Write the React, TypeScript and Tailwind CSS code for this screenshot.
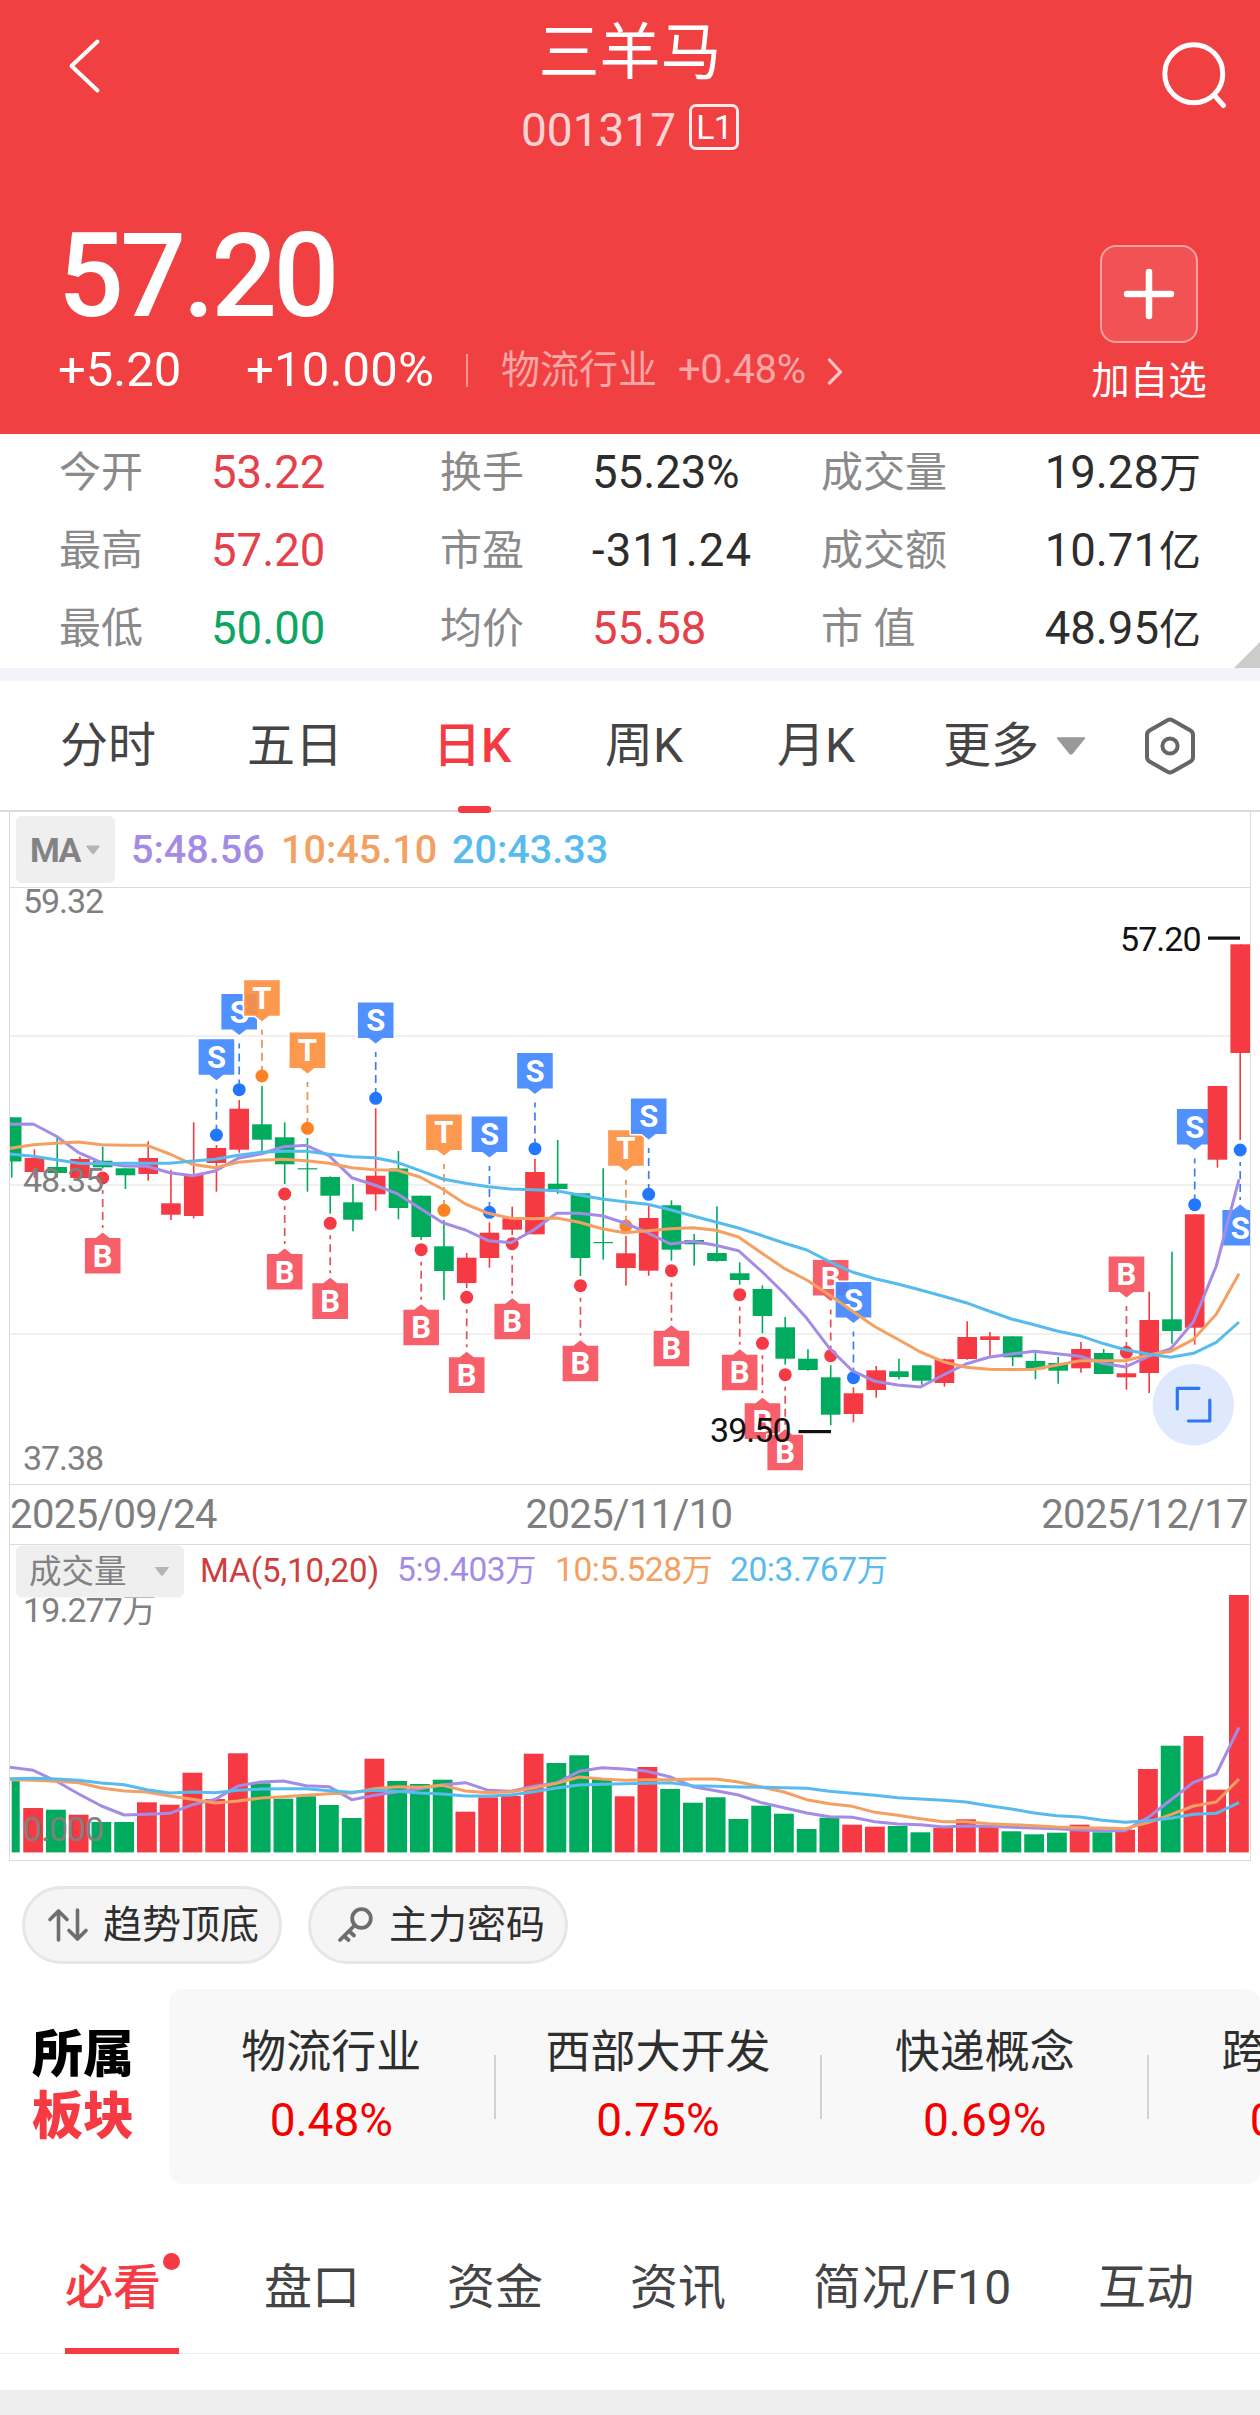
import React from "react";

const RED = "#f63a43";
const GREEN = "#00ab5e";

type Candle = [up: 0 | 1, high: number, top: number, bottom: number, low: number];

const CANDLES: Candle[] = [
  [0, 1117.3, 1117.3, 1161.5, 1177.7], [1, 1149.3, 1158, 1172, 1177.7], [0, 1137, 1167, 1173, 1177.7],
  [1, 1156.7, 1159, 1178, 1178], [0, 1146.7, 1160.7, 1167.3, 1168.3], [0, 1168.3, 1168.3, 1175.3, 1189],
  [1, 1141.3, 1158, 1174, 1180.7], [1, 1170, 1203.3, 1214.7, 1220], [1, 1122.3, 1175, 1216, 1218.3],
  [1, 1145, 1148, 1163, 1191.7], [1, 1100, 1108.7, 1149.7, 1152.7], [0, 1086, 1124.3, 1139.7, 1151],
  [0, 1122.3, 1137.3, 1164.3, 1184], [0, 1138, 1168.2, 1169.4, 1191.7], [0, 1176.3, 1177, 1195.7, 1213.7],
  [0, 1184, 1202.3, 1219.7, 1231.3], [1, 1108.3, 1175.7, 1194.3, 1210.7], [0, 1151, 1168.5, 1208, 1219.3],
  [0, 1195.7, 1195.7, 1237, 1240], [0, 1220, 1246.3, 1271, 1300], [1, 1253, 1257.7, 1283, 1288],
  [1, 1222.3, 1232.7, 1258, 1267.7], [1, 1206.7, 1218.3, 1229.7, 1235], [1, 1159, 1172, 1234.3, 1234.3],
  [0, 1140, 1183.7, 1189, 1194], [0, 1193.3, 1193.3, 1258, 1276], [0, 1168.3, 1242, 1243.2, 1259.7],
  [1, 1236, 1253.3, 1268, 1285.7], [1, 1206, 1218, 1270.7, 1275.7], [0, 1200.3, 1205.3, 1249.7, 1260.7],
  [0, 1234, 1240, 1244.3, 1265.7], [0, 1206.3, 1253, 1261, 1261.7], [0, 1262.3, 1273.3, 1280, 1284.7],
  [0, 1285.3, 1289, 1316, 1333.3], [0, 1317, 1327.3, 1358.7, 1364.7], [0, 1349.3, 1358.7, 1370, 1370.7],
  [0, 1365.3, 1377.3, 1414.7, 1425.3], [1, 1387.3, 1393.3, 1414, 1422.3], [1, 1366, 1370.3, 1390, 1397.7],
  [0, 1358.7, 1371.3, 1377, 1379.3], [0, 1365.3, 1365.3, 1380.7, 1384.7], [1, 1358.7, 1359.3, 1383, 1386.7],
  [1, 1321.3, 1337, 1359, 1359.7], [1, 1332, 1336.3, 1340, 1356], [0, 1336.3, 1336.3, 1357.3, 1366],
  [0, 1352.7, 1361, 1369.3, 1379.3], [0, 1357, 1363, 1370.7, 1383.7], [1, 1342, 1349, 1368.3, 1372.7],
  [0, 1349, 1353, 1374, 1374], [1, 1362.7, 1373.3, 1377.3, 1389.7], [1, 1291.7, 1320, 1373, 1393],
  [0, 1251.7, 1319.3, 1331, 1343.7], [1, 1214.3, 1214.3, 1327.7, 1344.7], [1, 1086, 1086, 1159.7, 1167.7],
  [1, 944.3, 944.3, 1053, 1140],
];

const MA5 = [
  1124.3, 1124, 1136, 1152.7, 1162.7, 1166, 1166.3, 1172.7, 1175.7, 1171, 1158.3, 1154, 1146.7, 1145.3, 1155.7,
  1177.7, 1185, 1193.7, 1208.3, 1222.7, 1230, 1240.7, 1242.7, 1230, 1213.3, 1213.3, 1215.7, 1223, 1232.7, 1244,
  1241.3, 1245.3, 1250.7, 1271, 1293.3, 1318.3, 1348.3, 1370.7, 1381.3, 1385, 1387, 1375, 1364, 1357.3, 1354,
  1351.3, 1353.7, 1356.3, 1363.3, 1367, 1356.7, 1348.7, 1321.7, 1266, 1179.3,
];
const MA10 = [
  1148.7, 1144.7, 1143.3, 1142, 1144.7, 1145.3, 1145.3, 1154, 1164.3, 1167.7, 1162.3, 1160.3, 1159.3, 1160.7,
  1163.3, 1167.7, 1169.7, 1170.3, 1177, 1189.3, 1204, 1213.3, 1218.3, 1218.7, 1218, 1222.3, 1228.7, 1232.7,
  1230.7, 1228.7, 1227.7, 1230.3, 1237, 1252.7, 1268.3, 1280, 1295, 1311, 1326.7, 1339.3, 1352, 1361.7, 1367.3,
  1369.3, 1369.5, 1369.3, 1365, 1360.7, 1360.7, 1360.7, 1355, 1351.3, 1339.3, 1314.3, 1273.7,
];
const MA20 = [
  1153.7, 1156.3, 1159.7, 1163.3, 1163.7, 1163.3, 1163.3, 1163.3, 1161, 1159.3, 1155.3, 1152.3, 1151.3, 1151.3,
  1154.3, 1156.7, 1157.7, 1162.3, 1170.7, 1179, 1183.3, 1186.7, 1189, 1189.7, 1190.7, 1195, 1199, 1201.7, 1204.3,
  1209.7, 1216, 1222, 1228, 1235.3, 1243, 1250, 1261.7, 1272, 1278.7, 1284, 1290, 1296.3, 1302.7, 1311, 1319,
  1324.7, 1331, 1335.7, 1343.3, 1349.7, 1354, 1357.3, 1353.3, 1342.3, 1322,
];

type Mark = { kind: "S" | "T" | "B"; dot: number; above: boolean };
const MARKS: Record<number, Mark> = {
  4: { kind: "B", dot: 1178, above: false },
  9: { kind: "S", dot: 1135, above: true },
  10: { kind: "S", dot: 1089.7, above: true },
  11: { kind: "T", dot: 1076, above: true },
  12: { kind: "B", dot: 1194, above: false },
  13: { kind: "T", dot: 1128.3, above: true },
  14: { kind: "B", dot: 1223.3, above: false },
  16: { kind: "S", dot: 1098.3, above: true },
  18: { kind: "B", dot: 1249.7, above: false },
  19: { kind: "T", dot: 1210.3, above: true },
  20: { kind: "B", dot: 1297.3, above: false },
  21: { kind: "S", dot: 1212.3, above: true },
  22: { kind: "B", dot: 1243.7, above: false },
  23: { kind: "S", dot: 1148.7, above: true },
  25: { kind: "B", dot: 1285.7, above: false },
  27: { kind: "T", dot: 1226, above: true },
  28: { kind: "S", dot: 1194.3, above: true },
  29: { kind: "B", dot: 1270.7, above: false },
  32: { kind: "B", dot: 1294.7, above: false },
  33: { kind: "B", dot: 1343.3, above: false },
  34: { kind: "B", dot: 1374.7, above: false },
  36: { kind: "B", dot: 1355.7, above: true },
  37: { kind: "S", dot: 1377.7, above: true },
  49: { kind: "B", dot: 1352.3, above: true },
  52: { kind: "S", dot: 1204.7, above: true },
  54: { kind: "S", dot: 1150, above: false },
};
const MARK_COLOR = { S: "#2377ff", T: "#fd8224", B: "#f63a43" };
const MARK_DASH = { S: "#3f7fe8", T: "#e8924f", B: "#e2525c" };
const MARK_FILL = { S: "#4287ff", T: "#fd8f40", B: "#f6535e" };

const VOLUME_TOPS = [
  1781, 1808, 1809.7, 1814.7, 1822, 1822, 1802.3, 1804.7, 1772.7, 1799, 1753.3, 1783.3, 1798.7, 1796.3, 1805, 1818,
  1758.7, 1781, 1784, 1779.7, 1811.7, 1797.3, 1796, 1753.7, 1763, 1755.3, 1778.3, 1796.3, 1767, 1789, 1802.7,
  1797.3, 1819, 1805.7, 1813.7, 1829, 1817.7, 1824.7, 1826.7, 1826, 1832.3, 1828, 1819.3, 1827, 1831.3, 1834.3,
  1832.7, 1824.7, 1832.3, 1829.7, 1769, 1745.7, 1736, 1789.7, 1595,
];
/* Volume averages, in thirds of a pixel below the panel's 1520 line. */
const VMA5 = [
  741, 751, 783, 822, 858, 885, 883, 880, 854, 838, 798, 786, 783, 797, 800, 839, 826, 815, 806, 794, 788, 811, 814,
  799, 789, 754, 743, 747, 754, 771, 800, 812, 825, 848, 863, 879, 890, 892, 905, 912, 914, 921, 918, 919, 922, 924,
  926, 930, 932, 932, 893, 840, 787, 762, 622,
];
const VMA10 = [
  779, 781, 784, 788, 804, 813, 816, 828, 838, 849, 843, 834, 830, 826, 821, 819, 806, 800, 802, 796, 813, 818, 815,
  804, 790, 771, 777, 781, 779, 779, 777, 777, 786, 801, 816, 839, 851, 859, 877, 886, 896, 905, 905, 911, 914, 917,
  921, 923, 924, 926, 908, 884, 858, 846, 777,
];
const VMA20 = [
  776, 775, 777, 781, 789, 794, 809, 819, 816, 818, 811, 807, 806, 806, 812, 817, 811, 814, 819, 822, 828, 828, 825,
  815, 804, 795, 793, 791, 790, 788, 797, 799, 801, 802, 803, 805, 814, 820, 826, 833, 837, 841, 846, 857, 867, 879,
  887, 891, 901, 907, 902, 895, 883, 880, 848,
];

const cx = (i: number) => 11.7 + 22.75 * i;
const linePoints = (ys: number[]) => ys.map((y, i) => `${i === 0 ? 8 : cx(i) - 1.2},${y}`).join(" ");
const volPoints = (vs: number[]) => linePoints(vs.map((v) => 1520 + v / 3));

function Marker({ i, kind, dot, above }: Mark & { i: number }) {
  const x = cx(i);
  const top = above ? dot - 95.8 : dot + 60;
  const bottom = top + 35.6;
  const l = x - 17.8;
  const r = x + 17.8;
  const d = above
    ? `M${l} ${top}H${r}V${bottom}H${x + 7}L${x} ${bottom + 5.5}L${x - 7} ${bottom}H${l}Z`
    : `M${l} ${bottom}H${r}V${top}H${x + 7}L${x} ${top - 5.5}L${x - 7} ${top}H${l}Z`;
  return (
    <g>
      <line
        x1={x}
        x2={x}
        y1={above ? bottom + 14 : dot + 12}
        y2={above ? dot - 6 : top - 10}
        stroke={MARK_DASH[kind]}
        strokeWidth="1.7"
        strokeDasharray="8 5"
        strokeDashoffset={above ? 3 : 4}
      />
      <path d={d} fill={MARK_FILL[kind]} stroke="#fff" strokeWidth="3" strokeLinejoin="round" fillOpacity="0.92" paintOrder="stroke" />
      <text x={x} y={top + 28.7} fontSize="31" fontWeight="700" fill="#fff" textAnchor="middle">
        {kind}
      </text>
      <circle cx={x} cy={dot} r="6.5" fill={MARK_COLOR[kind]} />
    </g>
  );
}

function PriceChart() {
  return (
    <svg viewBox="10 888 1240 596" className="block h-[596px] w-[1240px]" fontFamily="Roboto, sans-serif">
      {[1036, 1185, 1334].map((y) => (
        <rect key={y} x="10" y={y - 1} width="1240" height="2" fill="#f0f0f0" />
      ))}
      {CANDLES.map(([up, high, top, bottom, low], i) => {
        const color = up ? RED : GREEN;
        return (
          <g key={i}>
            <rect x={cx(i) - 0.8} y={high} width="1.6" height={Math.max(low - high, 1)} fill={color} />
            <rect x={cx(i) - 9.8} y={top} width="19.6" height={Math.max(bottom - top, 1)} fill={color} />
            {MARKS[i] && <Marker i={i} {...MARKS[i]} />}
          </g>
        );
      })}
      <g fill="none" strokeWidth="3" strokeLinejoin="round">
        <polyline points={linePoints(MA5)} stroke="#a48ce6" />
        <polyline points={linePoints(MA10)} stroke="#f4a062" />
        <polyline points={linePoints(MA20)} stroke="#58bbef" />
      </g>
      <g fontSize="34" fill="#808080">
        <text x="23" y="913" textLength="81">59.32</text>
        <text x="23" y="1191.5" textLength="81">48.35</text>
        <text x="23" y="1470" textLength="81">37.38</text>
      </g>
      <g fontSize="34" fill="#111">
        <text x="1120" y="951" textLength="81.5">57.20</text>
        <text x="710" y="1441.7" textLength="81.5">39.50</text>
        <rect x="1208" y="936.5" width="32" height="3.2" />
        <rect x="798.5" y="1430" width="32.5" height="3.2" />
      </g>
      <circle cx="1193.3" cy="1404.7" r="40.7" fill="#dfe9fd" />
      <path
        d="M1177.3 1409V1388.3H1199M1209.8 1400V1421H1188.5"
        fill="none"
        stroke="#2b77f6"
        strokeWidth="3.2"
        strokeLinecap="round"
        strokeLinejoin="round"
      />
    </svg>
  );
}

function VolumeChart() {
  return (
    <svg viewBox="10 1594 1240 266" className="block h-[266px] w-[1240px]" fontFamily="Roboto, 'Noto Sans CJK SC', sans-serif">
      {VOLUME_TOPS.map((top, i) => (
        <rect
          key={i}
          x={cx(i) - (i === 0 ? 0 : 11.2)}
          y={top}
          width={i === 0 ? 8 : 19.8}
          height={1852.4 - top}
          fill={CANDLES[i][0] ? RED : GREEN}
        />
      ))}
      <g fill="none" strokeWidth="3" strokeLinejoin="round">
        <polyline points={volPoints(VMA5)} stroke="#a48ce6" />
        <polyline points={volPoints(VMA10)} stroke="#f4a062" />
        <polyline points={volPoints(VMA20)} stroke="#58bbef" />
      </g>
      <g fontSize="34" fill="#808080">
        <text x="23" y="1621.7" textLength="133">19.277万</text>
        <text x="23" y="1841" textLength="81">0.000</text>
      </g>
    </svg>
  );
}

function Header() {
  return (
    <header className="h-[434px] bg-[#f04042] text-white">
      <div className="grid h-[150px] grid-cols-[200px_1fr_200px]">
        <svg className="ml-[60px] mt-[30px] h-[72px] w-[50px]" viewBox="60 30 50 72" fill="none" stroke="#fff" strokeWidth="4" strokeLinecap="round" strokeLinejoin="round">
          <path d="M97.5 41.5L71.5 66L97.5 90.5" />
        </svg>
        <div className="flex flex-col items-center">
          <h1 className="mt-[17px] text-[61px] leading-[72px]">三羊马</h1>
          <div className="mt-[15px] flex h-[46px] items-center gap-[13px]">
            <span className="pt-[5px] text-[46px] leading-[46px] text-[#fdd2d2]">001317</span>
            <span className="flex h-[46px] w-[50px] items-center justify-center rounded-[7px] border-[3px] border-white/90 text-[34px] leading-[40px] tracking-[-1px]">
              L1
            </span>
          </div>
        </div>
        <svg className="ml-[90px] mt-[35px] h-[80px] w-[90px]" viewBox="1150 35 90 80" fill="none" stroke="#fff" strokeWidth="5" strokeLinecap="round">
          <circle cx="1193.8" cy="73.7" r="29" />
          <path d="M1214.5 95.5L1223.5 105.5" />
        </svg>
      </div>
      <div className="flex justify-between">
        <div>
          <div className="ml-[58px] mt-[68px] text-[116px] font-medium leading-[116px] tracking-[-3.6px]">57.20</div>
          <div className="mt-[16px] flex h-[40px] items-center pl-[58px]">
            <span className="w-[188px] text-[49px] leading-[40px]">+5.20</span>
            <span className="w-[220px] text-[49px] leading-[40px] tracking-[0.2px]">+10.00%</span>
            <span className="h-[33px] w-[2px] bg-white/45" />
            <span className="ml-[33px] w-[177px] text-[39px] leading-[40px] text-[#f9a6a6]">物流行业</span>
            <span className="w-[148px] text-[40px] leading-[40px] tracking-[-0.4px] text-[#f9a6a6]">+0.48%</span>
            <svg className="h-[30px] w-[20px]" viewBox="0 0 20 30" fill="none" stroke="#fcc4c4" strokeWidth="3.2" strokeLinecap="round" strokeLinejoin="round">
              <path d="M3.5 5L14.5 17L3.5 28" />
            </svg>
          </div>
        </div>
        <div className="mr-[50px] flex w-[122px] flex-col items-center">
          <div className="mt-[95px] flex h-[98px] w-[98px] items-center justify-center rounded-[16px] border-2 border-white/45 bg-white/10">
            <svg className="h-[52px] w-[52px]" viewBox="0 0 52 52" stroke="#fff" strokeWidth="6.5" strokeLinecap="round">
              <path d="M26 4V48M4 26H48" />
            </svg>
          </div>
          <span className="mt-[17px] text-[38.5px] leading-[42px]">加自选</span>
        </div>
      </div>
    </header>
  );
}

const STATS = [
  ["今开", "53.22", "text-[#e5414b]", "换手", "55.23%", "text-[#2d2d2d]", "成交量", "19.28", "万"],
  ["最高", "57.20", "text-[#e5414b]", "市盈", "-311.24", "text-[#2d2d2d] tracking-[1.1px]", "成交额", "10.71", "亿"],
  ["最低", "50.00", "text-[#0ea562]", "均价", "55.58", "text-[#e5414b]", "市 值", "48.95", "亿"],
];

function Stats() {
  return (
    <section className="relative h-[234px]">
      {STATS.map((r) => (
        <div key={r[0]} className="flex h-[78px] items-center pl-[59px] text-[45.5px] leading-[50px]">
          <span className="w-[152px] text-[42px] text-[#8a8a8a]">{r[0]}</span>
          <span className={`w-[229px] ${r[2]}`}>{r[1]}</span>
          <span className="w-[152px] text-[42px] text-[#8a8a8a]">{r[3]}</span>
          <span className={`w-[229px] ${r[5]}`}>{r[4]}</span>
          <span className="w-[130px] text-[42px] text-[#8a8a8a]">{r[6]}</span>
          <span className="w-[250px] text-right text-[#2d2d2d]">
            {r[7]}
            <span className="text-[42px]">{r[8]}</span>
          </span>
        </div>
      ))}
      <svg className="absolute bottom-0 right-0 h-[26px] w-[26px]" viewBox="0 0 26 26">
        <path d="M26 0V26H0Z" fill="#ccc" />
      </svg>
    </section>
  );
}

function PeriodTabs() {
  return (
    <nav className="flex h-[131px] items-center border-b-2 border-[#dcdcdc] pl-[60px] text-[48px] leading-[60px] text-[#444]">
      <span className="w-[187px]">分时</span>
      <span className="w-[186px]">五日</span>
      <span className="relative w-[172px] font-medium text-[#f63a43]">
        日K
        <i className="absolute left-[25px] top-[90px] h-[7px] w-[33px] rounded-[3px] bg-[#f63a43]" />
      </span>
      <span className="w-[172px]">周K</span>
      <span className="w-[166px]">月K</span>
      <span className="w-[112px]">更多</span>
      <svg className="h-[18px] w-[32px]" viewBox="0 0 32 18">
        <path d="M2.5 1H29.5L17 16.5Q16 17.5 15 16.5Z" fill="#999" stroke="#999" strokeWidth="1.5" strokeLinejoin="round" />
      </svg>
      <svg className="ml-[56px] h-[60px] w-[54px]" viewBox="0 0 54 60" fill="none" stroke="#666" strokeWidth="4" strokeLinejoin="round">
        <path d="M24.5 4.2Q27 2.8 29.5 4.2L47.5 14.5Q50 16 50 19V41Q50 44 47.5 45.5L29.5 55.8Q27 57.2 24.5 55.8L6.5 45.5Q4 44 4 41V19Q4 16 6.5 14.5Z" />
        <circle cx="27" cy="30" r="7.6" />
      </svg>
    </nav>
  );
}

function Caret({ className }: { className: string }) {
  return (
    <svg className={className} viewBox="0 0 16 10">
      <path d="M1.5 1H14.5L8.8 8.5Q8 9.3 7.2 8.5Z" fill="#b5b5b5" stroke="#b5b5b5" strokeLinejoin="round" />
    </svg>
  );
}

function ChartPanel() {
  return (
    <section className="ml-[9px] w-[1242px] border-x border-b border-[#dcdcdc]">
      <div className="flex h-[76px] items-center border-b border-[#dcdcdc] pl-[6px] text-[39.5px] font-medium leading-[50px]">
        <div className="flex h-[67px] w-[99px] items-center rounded-[6px] bg-[#efefef] pl-[14px] text-[34px] font-bold tracking-[-1.5px] text-[#838383]">
          <span className="w-[55px]">MA</span>
          <Caret className="h-[10px] w-[16px]" />
        </div>
        <span className="ml-[16px] w-[150px] text-[#a48ce6]">5:48.56</span>
        <span className="w-[171px] text-[#f4a062]">10:45.10</span>
        <span className="text-[#58bbef]">20:43.33</span>
      </div>
      <PriceChart />
      <div className="flex h-[61px] items-center justify-between border-y border-[#dcdcdc] pr-[2px] text-[40px] leading-[50px] tracking-[-0.6px] text-[#7e7e7e]">
        <span>2025/09/24</span>
        <span>2025/11/10</span>
        <span>2025/12/17</span>
      </div>
      <div className="relative flex h-[49px] items-center pl-[6px] text-[33.5px] leading-[52px]">
        <div className="flex h-[52px] w-[168px] translate-y-[1.5px] items-center rounded-[6px] bg-[#efefef] pl-[13px] text-[32.5px] text-[#828282]">
          <span className="w-[125px]">成交量</span>
          <Caret className="h-[10px] w-[16px]" />
        </div>
        <span className="ml-[16px] w-[197px] pt-[2px] text-[33px] text-[#cf3d3d]">MA(5,10,20)</span>
        <span className="w-[158px] pt-[2px] tracking-[-0.4px] text-[#a48ce6]">5:9.403<span className="text-[31px]">万</span></span>
        <span className="w-[175px] pt-[2px] tracking-[-0.4px] text-[#f4a062]">10:5.528<span className="text-[31px]">万</span></span>
        <span className="pt-[2px] tracking-[-0.4px] text-[#58bbef]">20:3.767<span className="text-[31px]">万</span></span>
      </div>
      <VolumeChart />
    </section>
  );
}

function Tools() {
  return (
    <div className="flex gap-[26px] pl-[22px] pt-[25px]">
      <div className="flex h-[78px] w-[260px] items-center rounded-full border-[3px] border-[#e6e6e6] bg-[#f5f5f5] pl-[22px] text-[39px] leading-[50px] text-[#2e2e2e]">
        <svg className="mr-[14px] h-[36px] w-[42px]" viewBox="0 0 42 36" fill="none" stroke="#6e6e6e" strokeWidth="3.6" strokeLinecap="round" strokeLinejoin="round">
          <path d="M11.5 33V4.5M3 12.5L11.5 4L20 12.5M30.5 3V31.5M22 23.5L30.5 32L39 23.5" />
        </svg>
        趋势顶底
      </div>
      <div className="flex h-[78px] w-[260px] items-center rounded-full border-[3px] border-[#e6e6e6] bg-[#f5f5f5] pl-[25px] text-[39px] leading-[50px] text-[#2e2e2e]">
        <svg className="mr-[15px] h-[38px] w-[38px]" viewBox="0 0 38 38" fill="none" stroke="#6e6e6e" strokeWidth="3.8" strokeLinecap="round">
          <circle cx="25.5" cy="12.5" r="9.3" />
          <path d="M18.5 19.5L4 34M13 25L18 29.5M8 30L12.5 34" />
        </svg>
        主力密码
      </div>
    </div>
  );
}

const SECTORS = [
  ["物流行业", "0.48%"],
  ["西部大开发", "0.75%"],
  ["快递概念", "0.69%"],
  ["跨境电商", "0.62%"],
];

function Sectors() {
  return (
    <section className="mt-[25px] flex h-[195px]">
      <h2 className="w-[169px] shrink-0 pl-[32px] pt-[35px] text-[51px] font-black leading-[62px] text-black">
        所属
        <br />
        <span className="text-[#f63a43]">板块</span>
      </h2>
      <div className="flex w-[1091px] overflow-hidden rounded-[14px] bg-[#f8f8f8]">
        {SECTORS.map(([name, value]) => (
          <div key={name} className="flex w-[326.7px] shrink-0 items-center justify-between">
            <div className="w-[325px] text-center">
              <div className="text-[45px] leading-[60px] text-[#2e2e2e]">{name}</div>
              <div className="mt-[7px] text-[46px] leading-[60px] text-[#f40000]">{value}</div>
            </div>
            <span className="h-[64px] w-[2px] bg-[#d2d2d2]" />
          </div>
        ))}
      </div>
    </section>
  );
}

function BottomTabs() {
  return (
    <nav className="mt-[69px] flex h-[101px] border-b border-[#ececec] pl-[65px] text-[48px] leading-[70px] text-[#444]">
      <span className="relative w-[199px] font-medium text-[#f63a43]">
        必看
        <i className="absolute left-[98px] top-0 h-[17px] w-[17px] rounded-full bg-[#f63a43]" />
        <i className="absolute bottom-[-1px] left-0 h-[6px] w-[114px] bg-[#f63a43]" />
      </span>
      <span className="w-[183px]">盘口</span>
      <span className="w-[183px]">资金</span>
      <span className="w-[183px]">资讯</span>
      <span className="w-[285px] tracking-[0.4px]">简况/F10</span>
      <span>互动</span>
    </nav>
  );
}

export default function App() {
  return (
    <main className="h-[2415px] w-[1260px] overflow-hidden bg-white font-['Roboto','Noto_Sans_CJK_SC',sans-serif]">
      <Header />
      <Stats />
      <div className="h-[13px] bg-[#f2f4f9]" />
      <PeriodTabs />
      <ChartPanel />
      <Tools />
      <Sectors />
      <BottomTabs />
      <div className="mt-[36px] h-[40px] bg-[#ededed]" />
    </main>
  );
}
